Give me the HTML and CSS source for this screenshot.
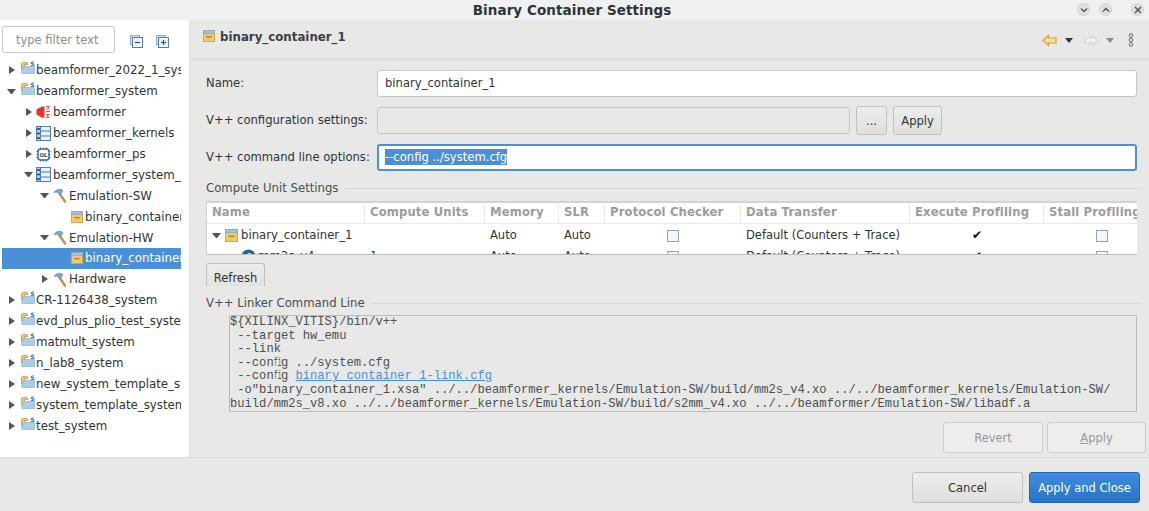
FILE: index.html
```html
<!DOCTYPE html>
<html lang="en">
<head>
<meta charset="utf-8">
<title>Binary Container Settings</title>
<link rel="stylesheet" href="styles.css">
</head>
<body>
<svg class="defs" width="0" height="0" aria-hidden="true">
  <defs>
    <symbol id="i-folder" viewBox="0 0 14 14">
      <path d="M.5 2.500V9h3V3.500H7L6 1.500H1.500z" fill="#f3c57b" stroke="#c8963e" stroke-width=".8"/>
      <path d="M.7 12.500 2 5.500h11.500v7z" fill="#a9cdea" stroke="#7ea9cc" stroke-width=".6"/>
      <text x="9.200" y="4.600" font-size="6" font-weight="700" fill="#2f6fb0" font-family="DejaVu Sans">S</text>
    </symbol>
    <symbol id="i-tree" viewBox="0 0 15 15">
      <rect x=".5" y=".5" width="14" height="14" fill="#e8f0f8" stroke="#4f7fae"/>
      <rect x=".5" y=".5" width="4" height="14" fill="#b9d0e6" stroke="#4f7fae"/>
      <path d="M4.500 5h10M4.500 10h10" stroke="#4f7fae"/>
      <path d="M1 3h3M1 7.500h3M1 12h3" stroke="#1f3f60" stroke-width="1.400"/>
    </symbol>
    <symbol id="i-chip" viewBox="0 0 15 15">
      <rect x="2" y="2" width="11" height="11" rx="2.500" fill="#fff" stroke="#2f6fa8" stroke-width="1.400"/>
      <path d="M4.500 .5v2M7.500 .5v2M10.500 .5v2M4.500 12.500v2M7.500 12.500v2M10.500 12.500v2M.5 4.500h2M.5 7.500h2M.5 10.500h2M12.500 4.500h2M12.500 7.500h2M12.500 10.500h2" stroke="#2f6fa8"/>
      <text x="7.500" y="9.500" text-anchor="middle" font-size="5.500" font-weight="700" fill="#24547f" font-family="DejaVu Sans">OL</text>
    </symbol>
    <symbol id="i-red" viewBox="0 0 15 15">
      <path d="M.5 4.500 3 3l3-1.500h2.500v11H6L3 11 .5 9.500z" fill="#e8342a"/>
      <path d="M10 1.500h3l-1.500 2.500h2M10 6.500h4M14 9.500h-3l1.500 3h-2.500" fill="none" stroke="#e8583a" stroke-width="1.100"/>
    </symbol>
    <symbol id="i-hammer" viewBox="0 0 15 15">
      <path d="M6.500 5.500 12 13.500" stroke="#c8913f" stroke-width="2.400" stroke-linecap="round"/>
      <path d="M1 4.500C2.500 1.800 5.500.8 8.500 1.500L10 3 7.500 6.500 5.500 4.700C4 4 2.500 4 1 4.500z" fill="#7fa7c6" stroke="#5d86a8" stroke-width=".6"/>
    </symbol>
    <symbol id="i-box" viewBox="0 0 13 13">
      <rect x=".5" y=".5" width="12" height="12" fill="#f4c968" stroke="#d8a545"/>
      <rect x=".5" y=".5" width="12" height="3.200" fill="#9cc3e4" stroke="#7fa8cc" stroke-width=".7"/>
      <rect x="3.500" y="6.500" width="6" height="1.600" fill="#b8862f"/>
    </symbol>
    <symbol id="i-collapse" viewBox="0 0 13 13">
      <rect x=".5" y=".5" width="9" height="9" fill="#cfe0ef" stroke="#8eb1cf"/>
      <rect x="2.500" y="2.500" width="10" height="10" fill="#eef4fa" stroke="#4f81ad"/>
      <path d="M5 7.500h5" stroke="#1f4f7a" stroke-width="1.200"/>
    </symbol>
    <symbol id="i-expand" viewBox="0 0 13 13">
      <rect x=".5" y=".5" width="9" height="9" fill="#cfe0ef" stroke="#8eb1cf"/>
      <rect x="2.500" y="2.500" width="10" height="10" fill="#eef4fa" stroke="#4f81ad"/>
      <path d="M5 7.500h5M7.500 5v5" stroke="#1f4f7a" stroke-width="1.200"/>
    </symbol>
  </defs>
</svg>

<header class="titlebar">
  <h1 class="title">Binary Container Settings</h1>
  <div class="wm">
    <span class="wm-btn"><svg width="8" height="8" viewBox="0 0 8 8"><path d="M1 2.500 4 5.500 7 2.500" class="wm-ic"/></svg></span>
    <span class="wm-btn"><svg width="8" height="8" viewBox="0 0 8 8"><path d="M1 5.500 4 2.500 7 5.500" class="wm-ic"/></svg></span>
    <span class="wm-btn wm-close"><svg width="8" height="8" viewBox="0 0 8 8"><path d="M1 1 7 7M7 1 1 7" class="wm-ic"/></svg></span>
  </div>
</header>

<div class="body">
  <aside class="side">
    <div class="filter-row">
      <div class="filter">type filter text</div>
      <svg class="tool" width="13" height="13"><use href="#i-collapse"/></svg>
      <svg class="tool" width="13" height="13"><use href="#i-expand"/></svg>
    </div>
    <ul class="tree">
      <li class="node l0"><span class="arrow right"></span><svg class="ic ic-f"><use href="#i-folder"/></svg>beamformer_2022_1_system</li>
      <li class="node l0"><span class="arrow down"></span><svg class="ic ic-f"><use href="#i-folder"/></svg>beamformer_system</li>
      <li class="node l1"><span class="arrow right"></span><svg class="ic"><use href="#i-red"/></svg>beamformer</li>
      <li class="node l1"><span class="arrow right"></span><svg class="ic"><use href="#i-tree"/></svg>beamformer_kernels</li>
      <li class="node l1"><span class="arrow right"></span><svg class="ic"><use href="#i-chip"/></svg>beamformer_ps</li>
      <li class="node l1"><span class="arrow down"></span><svg class="ic"><use href="#i-tree"/></svg>beamformer_system_hw_link</li>
      <li class="node l2"><span class="arrow down"></span><svg class="ic"><use href="#i-hammer"/></svg>Emulation-SW</li>
      <li class="node l3"><svg class="ic ic-b"><use href="#i-box"/></svg>binary_container_1</li>
      <li class="node l2"><span class="arrow down"></span><svg class="ic"><use href="#i-hammer"/></svg>Emulation-HW</li>
      <li class="node l3 selected"><svg class="ic ic-b"><use href="#i-box"/></svg>binary_container_1</li>
      <li class="node l2"><span class="arrow right"></span><svg class="ic"><use href="#i-hammer"/></svg>Hardware</li>
      <li class="node l0"><span class="arrow right"></span><svg class="ic ic-f"><use href="#i-folder"/></svg>CR-1126438_system</li>
      <li class="node l0"><span class="arrow right"></span><svg class="ic ic-f"><use href="#i-folder"/></svg>evd_plus_plio_test_system</li>
      <li class="node l0"><span class="arrow right"></span><svg class="ic ic-f"><use href="#i-folder"/></svg>matmult_system</li>
      <li class="node l0"><span class="arrow right"></span><svg class="ic ic-f"><use href="#i-folder"/></svg>n_lab8_system</li>
      <li class="node l0"><span class="arrow right"></span><svg class="ic ic-f"><use href="#i-folder"/></svg>new_system_template_system</li>
      <li class="node l0"><span class="arrow right"></span><svg class="ic ic-f"><use href="#i-folder"/></svg>system_template_system</li>
      <li class="node l0"><span class="arrow right"></span><svg class="ic ic-f"><use href="#i-folder"/></svg>test_system</li>
    </ul>
  </aside>

  <main class="main">
    <div class="head">
      <svg class="ic-b head-ic"><use href="#i-box"/></svg>
      <h2 class="head-title">binary_container_1</h2>
      <div class="nav">
        <svg width="15" height="13" viewBox="0 0 15 13"><path d="M1 6.500 6.500 1.500V4h7.500v5H6.500v2.500z" fill="#fbe3a0" stroke="#dd9d24" stroke-width="1.200"/></svg>
        <span class="tri tri-dark"></span>
        <svg class="nav-fw" width="15" height="13" viewBox="0 0 15 13"><path d="M14 6.500 8.500 1.500V4H1v5h7.500v2.500z" fill="#f1f1f0" stroke="#d2d3d1" stroke-width="1.200"/></svg>
        <span class="tri tri-light"></span>
        <svg class="nav-more" width="6" height="14" viewBox="0 0 6 14"><g fill="none" stroke="#676767" stroke-width="1"><circle cx="3" cy="2.500" r="1.800"/><circle cx="3" cy="7" r="1.800"/><circle cx="3" cy="11.500" r="1.800"/></g></svg>
      </div>
    </div>

    <div class="form">
      <label class="lbl">Name:</label>
      <div class="input span2">binary_container_1</div>
      <label class="lbl">V++ configuration settings:</label>
      <div class="input disabled"></div>
      <div class="btn-pair">
        <button class="btn btn-dots">...</button>
        <button class="btn btn-apply">Apply</button>
      </div>
      <label class="lbl">V++ command line options:</label>
      <div class="input span2 focus"><span class="sel">--config ../system.cfg</span></div>
    </div>

    <div class="group"><span>Compute Unit Settings</span><i class="rule"></i></div>

    <div class="table">
      <div class="row thead">
        <div class="th">Name</div><div class="th">Compute Units</div><div class="th">Memory</div><div class="th">SLR</div><div class="th">Protocol Checker</div><div class="th">Data Transfer</div><div class="th">Execute Profiling</div><div class="th">Stall Profiling</div>
      </div>
      <div class="row">
        <div class="td td-name"><span class="arrow down"></span><svg class="ic-b"><use href="#i-box"/></svg>binary_container_1</div>
        <div class="td"></div><div class="td">Auto</div><div class="td">Auto</div>
        <div class="td td-c"><span class="check"></span></div>
        <div class="td">Default (Counters + Trace)</div>
        <div class="td td-c mark">✔</div>
        <div class="td td-c"><span class="check"></span></div>
      </div>
      <div class="row">
        <div class="td td-name td-sub"><span class="dash"></span><svg class="ic-k" width="15" height="15" viewBox="0 0 15 15"><circle cx="7.500" cy="7.500" r="7" fill="#2d5f95"/><text x="7.500" y="11" text-anchor="middle" font-size="9" font-weight="700" fill="#fff" font-family="DejaVu Sans">f</text></svg>mm2s_v4</div>
        <div class="td">1</div><div class="td">Auto</div><div class="td">Auto</div>
        <div class="td td-c"><span class="check"></span></div>
        <div class="td">Default (Counters + Trace)</div>
        <div class="td td-c mark">✔</div>
        <div class="td td-c"><span class="check"></span></div>
      </div>
    </div>

    <div class="refresh-clip"><button class="btn btn-refresh">Refresh</button></div>

    <div class="group group-linker"><span>V++ Linker Command Line</span><i class="rule"></i></div>

    <pre class="cmd">${XILINX_VITIS}/bin/v++
 --target hw_emu
 --link
 --con<span class="lig">fi</span>g ../system.cfg
 --con<span class="lig">fi</span>g <a class="link">binary_container_1-link.cfg</a>
 -o"binary_container_1.xsa" ../../beamformer_kernels/Emulation-SW/build/mm2s_v4.xo ../../beamformer_kernels/Emulation-SW/
build/mm2s_v8.xo ../../beamformer_kernels/Emulation-SW/build/s2mm_v4.xo ../../beamformer/Emulation-SW/libadf.a</pre>

    <div class="actions">
      <button class="btn btn-off">Revert</button>
      <button class="btn btn-off"><u>A</u>pply</button>
    </div>
  </main>
</div>

<footer class="foot">
  <button class="btn btn-foot">Cancel</button>
  <button class="btn btn-foot btn-primary">Apply and Close</button>
</footer>
</body>
</html>
```
FILE: styles.css
```css
* { box-sizing: border-box; }
html, body { margin: 0; padding: 0; }
body {
  width: 1149px;
  height: 511px;
  overflow: hidden;
  background: #e8e8e7;
  color: #2e3436;
  font-family: "DejaVu Sans", sans-serif;
  font-size: 11.700px;
  display: flex;
  flex-direction: column;
}
.defs { display: block; height: 0; }
button { font-family: inherit; }

.titlebar {
  height: 20px;
  flex: none;
  display: flex;
  align-items: center;
  justify-content: center;
  background: #eff0f1;
  position: relative;
}
.title { margin: 0 5px 0 0; font-size: 13.500px; font-weight: 700; line-height: 18px; color: #2e3436; letter-spacing: .08px; }
.wm { position: absolute; right: 5px; top: 3px; display: flex; gap: 9px; }
.wm-btn { width: 13px; height: 13px; border-radius: 50%; background: #e0e0e0; border: 1px solid #d2d2d2; display: flex; align-items: center; justify-content: center; }
.wm-close { margin-left: 10px; }
.wm-ic { fill: none; stroke: #4a5052; stroke-width: 1.300; }

.body { flex: 1; display: flex; min-height: 0; }

.side { width: 190px; flex: none; height: 437px; background: #fff; padding: 6px 0 0 2px; border-right: 1px solid #e2e2e1; }
.filter-row { display: flex; align-items: center; height: 27px; }
.filter { width: 113px; height: 27px; border: 1px solid #c6c7c5; border-radius: 3px; padding: 0 0 0 13px; line-height: 27px; color: #8b8e8f; font-size: 11.500px; }
.tool { margin: 3px -2px 0 15px; flex: none; }
.tool + .tool { margin-left: 15px; }

.tree { list-style: none; margin: 7px 0 0 -2px; padding: 0; width: 181px; font-size: 11.800px; }
.node { height: 20.900px; display: flex; align-items: center; white-space: nowrap; overflow: hidden; }
.l0 { padding-left: 7px; }
.l1 { padding-left: 24px; }
.l2 { padding-left: 40px; }
.l3 { padding-left: 71px; }
.selected { background: #4a90d9; color: #fff; margin-left: 2px; padding-left: 69px; }

.arrow { width: 0; height: 0; flex: none; display: inline-block; }
.arrow.right { width: 6px; border-left: 6px solid #555; border-top: 4px solid transparent; border-bottom: 4px solid transparent; margin-left: 2px; margin-right: 6px; }
.arrow.down { width: 9px; border-top: 5px solid #555; border-left: 4.500px solid transparent; border-right: 4.500px solid transparent; margin-right: 5px; }
.l1 .arrow.right { margin-right: 4px; }
.l1 .arrow.down { margin-right: 3px; }
.l2 .arrow.right { margin-right: 5px; }
.l2 .arrow.down { margin-right: 4px; }
.ic { width: 15px; height: 15px; flex: none; margin-right: 2px; }
.l2 .ic { margin-right: 1px; }
.ic-f { width: 14px; height: 14px; margin-right: 1px; margin-top: -4px; }
.ic-b { width: 13px; height: 13px; flex: none; margin-right: 3px; }
.l3 .ic-b { width: 12px; height: 12px; margin-right: 2px; }

.main { flex: 1; min-width: 0; padding: 0 3px 0 0; display: flex; flex-direction: column; }

.head { height: 40px; flex: none; display: flex; align-items: flex-start; padding: 10px 0 0 13px; margin-right: -3px; border-bottom: 2px solid #dededd; }
.head-ic { width: 12px; height: 12px; margin-right: 5px; }
.head-title { margin: 0; font-size: 11.800px; font-weight: 700; line-height: 14px; color: #3b4043; }
.nav { margin-left: auto; margin-right: 15px; margin-top: 3px; display: flex; align-items: center; }
.tri { display: inline-block; width: 0; height: 0; border-top: 5px solid #2e3436; border-left: 4.500px solid transparent; border-right: 4.500px solid transparent; margin-left: 8px; }
.tri-light { border-top-color: #8c8e8d; margin-left: 7px; }
.nav-fw { margin-left: 11px; }
.nav-more { margin-left: 14px; }

.form { display: grid; grid-template-columns: 171px 473px 287px; row-gap: 10px; padding: 10px 0 0 16px; align-items: center; }
.lbl { font-size: 11.600px; line-height: 15px; white-space: nowrap; }
.input { height: 27px; border: 1px solid #c6c7c5; border-radius: 3px; background: #fff; padding: 0 7px; line-height: 25px; font-size: 11.600px; white-space: nowrap; }
.span2 { grid-column: span 2; width: 760px; }
.disabled { background: #e8e8e7; }
.focus { border: 2px solid #4a90d9; padding: 0 6px; line-height: 23px; }
.sel { background: #4a90d9; color: #fff; display: inline-block; line-height: 16px; }

.btn-pair { display: flex; gap: 6px; padding-left: 6px; margin: -1px 0; }
.btn { margin: 0; border: 1px solid #c0c1bf; border-radius: 3px; background: linear-gradient(#ededec, #dfdfde); color: #2e3436; font-size: 11.500px; padding: 0; }
.btn-dots { width: 31px; height: 29px; }
.btn-apply { width: 49px; height: 29px; }

.group { display: flex; align-items: center; gap: 7px; padding-left: 16px; margin-top: 10px; color: #474d50; font-size: 11.700px; line-height: 15px; margin-right: 5px; }
.rule { flex: 1; height: 1px; background: #d6d6d5; }
.group-linker { margin-top: 10px; }

.table { margin: 5px 0 0 16px; width: 931px; height: 54px; flex: none; overflow: hidden; border-top: 2px solid #d3d3d2; border-bottom: 1px solid #bdbdbc; border-left: 1px solid #d3d3d2; background: #fff; }
.row { display: grid; grid-template-columns: 158px 120px 74px 46px 136px 169px 134px 115px; height: 21px; align-items: center; }
.thead { margin-bottom: 1px; }
.th { height: 100%; line-height: 19px; padding-left: 5px; font-weight: 700; font-size: 11.600px; color: #9a9c9d; letter-spacing: .15px; border-right: 1px solid #eaeaea; border-bottom: 1px solid #eaeaea; white-space: nowrap; overflow: hidden; }
.th:last-child { border-right: 0; }
.td { padding-left: 5px; font-size: 11.500px; white-space: nowrap; overflow: hidden; line-height: 21px; }
.td-name { display: flex; align-items: center; font-size: 11.700px; }
.td-name .arrow { margin-right: 4px; }
.td-sub { padding-left: 22px; }
.dash { width: 9px; height: 5px; flex: none; margin-right: 3px; border-top: 5px solid #555; }
.ic-k { flex: none; margin-right: 2px; }
.td-c { display: flex; justify-content: center; align-items: center; padding-left: 0; }
.check { width: 12px; height: 12px; display: block; border: 1px solid #8aa6bf; background: #f3f7fb; }
.mark { font-size: 12px; color: #111; }

.refresh-clip { height: 23px; margin: 8px 0 0 16px; overflow: hidden; flex: none; }
.btn-refresh { width: 59px; height: 30px; border-bottom-color: transparent; line-height: 14px; }

.cmd { margin: 4px 0 0 39px; width: 908px; height: 97px; flex: none; padding: 0; overflow: hidden; border: 1px solid #bcbdbb; background: #e8e8e7; font-family: "Liberation Mono", monospace; font-size: 12.130px; line-height: 13.600px; color: #4a4f51; white-space: pre; }
.lig { display: inline-block; width: 7.280px; line-height: 13.600px; transform: scaleX(.5); transform-origin: left center; }
.link { color: #4a90d9; text-decoration: underline; }

.actions { display: flex; gap: 4px; margin: 10px 0 0 753px; flex: none; }
.btn-off { width: 100px; height: 31px; background: #ededec; border-color: #cdcdcc; color: #95989a; }
.actions .btn-off:last-child { width: 99px; }

.foot { height: 54px; flex: none; margin-top: 0; border-top: 1px solid #d9d9d8; display: flex; justify-content: flex-end; gap: 6px; padding: 14px 9px 0 0; }
.btn-foot { width: 111px; height: 31px; }
.btn-primary { background: linear-gradient(#3f8ee0, #2a72c6); border-color: #2865ad; color: #fff; }
```
